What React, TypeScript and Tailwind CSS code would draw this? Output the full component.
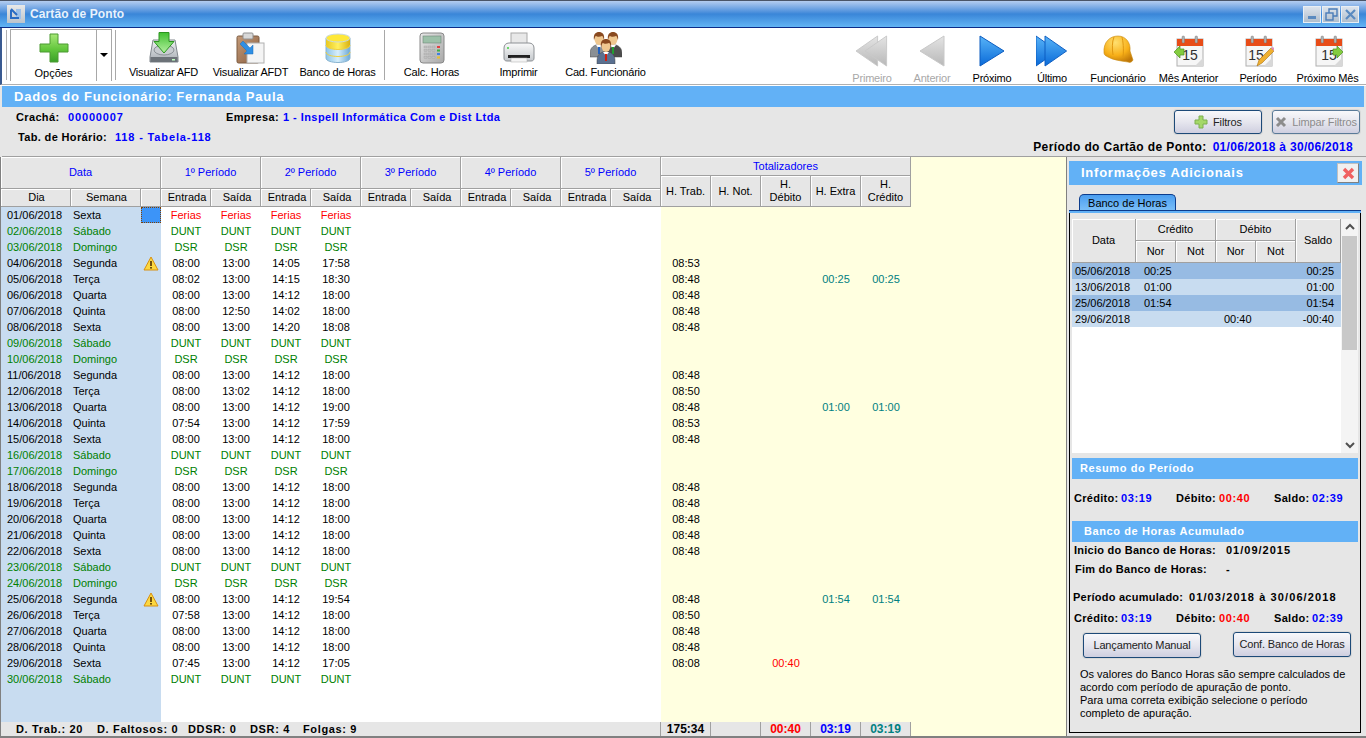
import React from "react";

const F = "[font-family:'Liberation_Sans',Arial,sans-serif]";

type Row = { d: string; w: string; t: string[]; k: "n" | "f" | "g"; trab?: string; deb?: string; ext?: string; cred?: string; mark?: "warn" | "sel" };
const std = ["08:00", "13:00", "14:12", "18:00"];
const fer = ["Ferias", "Ferias", "Ferias", "Ferias"];
const dunt = ["DUNT", "DUNT", "DUNT", "DUNT"];
const dsr = ["DSR", "DSR", "DSR", "DSR"];
const rows: Row[] = [
  { d: "01/06/2018", w: "Sexta", t: fer, k: "f", mark: "sel" },
  { d: "02/06/2018", w: "Sábado", t: dunt, k: "g" },
  { d: "03/06/2018", w: "Domingo", t: dsr, k: "g" },
  { d: "04/06/2018", w: "Segunda", t: ["08:00", "13:00", "14:05", "17:58"], k: "n", trab: "08:53", mark: "warn" },
  { d: "05/06/2018", w: "Terça", t: ["08:02", "13:00", "14:15", "18:30"], k: "n", trab: "08:48", ext: "00:25", cred: "00:25" },
  { d: "06/06/2018", w: "Quarta", t: std, k: "n", trab: "08:48" },
  { d: "07/06/2018", w: "Quinta", t: ["08:00", "12:50", "14:02", "18:00"], k: "n", trab: "08:48" },
  { d: "08/06/2018", w: "Sexta", t: ["08:00", "13:00", "14:20", "18:08"], k: "n", trab: "08:48" },
  { d: "09/06/2018", w: "Sábado", t: dunt, k: "g" },
  { d: "10/06/2018", w: "Domingo", t: dsr, k: "g" },
  { d: "11/06/2018", w: "Segunda", t: std, k: "n", trab: "08:48" },
  { d: "12/06/2018", w: "Terça", t: ["08:00", "13:02", "14:12", "18:00"], k: "n", trab: "08:50" },
  { d: "13/06/2018", w: "Quarta", t: ["08:00", "13:00", "14:12", "19:00"], k: "n", trab: "08:48", ext: "01:00", cred: "01:00" },
  { d: "14/06/2018", w: "Quinta", t: ["07:54", "13:00", "14:12", "17:59"], k: "n", trab: "08:53" },
  { d: "15/06/2018", w: "Sexta", t: std, k: "n", trab: "08:48" },
  { d: "16/06/2018", w: "Sábado", t: dunt, k: "g" },
  { d: "17/06/2018", w: "Domingo", t: dsr, k: "g" },
  { d: "18/06/2018", w: "Segunda", t: std, k: "n", trab: "08:48" },
  { d: "19/06/2018", w: "Terça", t: std, k: "n", trab: "08:48" },
  { d: "20/06/2018", w: "Quarta", t: std, k: "n", trab: "08:48" },
  { d: "21/06/2018", w: "Quinta", t: std, k: "n", trab: "08:48" },
  { d: "22/06/2018", w: "Sexta", t: std, k: "n", trab: "08:48" },
  { d: "23/06/2018", w: "Sábado", t: dunt, k: "g" },
  { d: "24/06/2018", w: "Domingo", t: dsr, k: "g" },
  { d: "25/06/2018", w: "Segunda", t: ["08:00", "13:00", "14:12", "19:54"], k: "n", trab: "08:48", ext: "01:54", cred: "01:54", mark: "warn" },
  { d: "26/06/2018", w: "Terça", t: ["07:58", "13:00", "14:12", "18:00"], k: "n", trab: "08:50" },
  { d: "27/06/2018", w: "Quarta", t: std, k: "n", trab: "08:48" },
  { d: "28/06/2018", w: "Quinta", t: std, k: "n", trab: "08:48" },
  { d: "29/06/2018", w: "Sexta", t: ["07:45", "13:00", "14:12", "17:05"], k: "n", trab: "08:08", deb: "00:40" },
  { d: "30/06/2018", w: "Sábado", t: dunt, k: "g" },
];

const color = (k: Row["k"]) => (k === "f" ? "text-[#ff0000]" : k === "g" ? "text-[#008000]" : "text-black");

const Hd = ({ children, className = "" }: { children?: React.ReactNode; className?: string }) => (
  <div className={"flex items-center justify-center text-center leading-[13px] bg-[#e6e6e6] border-r border-b border-[#a0a0a0] shadow-[inset_1px_1px_0_#fff] " + className}>{children}</div>
);

const Plus = () => (
  <svg width="32" height="32" viewBox="0 0 32 32">
    <defs><linearGradient id="pg" x1="0" y1="0" x2="0" y2="1"><stop offset="0" stopColor="#a8e878" /><stop offset="0.55" stopColor="#62c63c" /><stop offset="1" stopColor="#3aa028" /></linearGradient></defs>
    <path d="M12 2h8v10h10v8H20v10h-8V20H2v-8h10z" fill="url(#pg)" stroke="#4c9a32" strokeLinejoin="round" />
  </svg>
);
const SmallPlus = () => (
  <svg width="14" height="14" viewBox="0 0 14 14"><path d="M5 1h4v4h4v4H9v4H5V9H1V5h4z" fill="#a4d868" stroke="#7cb050" strokeLinejoin="round" /></svg>
);
const Disk = () => (
  <svg width="32" height="32" viewBox="0 0 32 32">
    <defs>
      <linearGradient id="dg" x1="0" y1="0" x2="0" y2="1"><stop offset="0" stopColor="#f0f2f4" /><stop offset="1" stopColor="#a4aab0" /></linearGradient>
      <linearGradient id="dga" x1="0" y1="0" x2="0" y2="1"><stop offset="0" stopColor="#40c030" /><stop offset="1" stopColor="#b4f0a0" /></linearGradient>
    </defs>
    <path d="M5 8h22l3 17v5H2v-5z" fill="url(#dg)" stroke="#80868c" />
    <rect x="2.5" y="25" width="27" height="5" fill="#6c7278" /><rect x="24" y="27" width="3" height="1.5" fill="#c0ffc0" />
    <ellipse cx="16" cy="18" rx="10" ry="5" fill="#c8ccd0" stroke="#8a9096" />
    <path d="M11 0.5h10v9h5L16 21 6 9.5h5z" fill="url(#dga)" stroke="#2c9420" strokeLinejoin="round" />
  </svg>
);
const Clip = () => (
  <svg width="32" height="32" viewBox="0 0 32 32">
    <defs><linearGradient id="cg" x1="0" y1="0" x2="1" y2="1"><stop offset="0" stopColor="#c49a78" /><stop offset="1" stopColor="#8a5f40" /></linearGradient></defs>
    <rect x="2" y="4" width="22" height="27" rx="1.5" fill="url(#cg)" stroke="#7a5a40" />
    <rect x="8" y="1" width="10" height="6" rx="1" fill="#d8d8d8" stroke="#909090" />
    <rect x="12" y="11" width="17" height="20" fill="#f4f4f4" stroke="#b0b0b0" />
    <path d="M8 9l7 7 3-3v9h-9l3-3-7-7z" fill="#2f8fe4" stroke="#1c6cb8" strokeWidth="0.5" />
  </svg>
);
const Db = () => (
  <svg width="32" height="32" viewBox="0 0 32 32">
    <defs><linearGradient id="bg" x1="0" y1="0" x2="1" y2="0"><stop offset="0" stopColor="#8cc4e8" /><stop offset="0.5" stopColor="#d8eefa" /><stop offset="1" stopColor="#6aa8d8" /></linearGradient>
    <linearGradient id="by" x1="0" y1="0" x2="1" y2="0"><stop offset="0" stopColor="#e8c820" /><stop offset="0.5" stopColor="#fff060" /><stop offset="1" stopColor="#d8b010" /></linearGradient></defs>
    <path d="M4 6v20c0 6 24 6 24 0V6z" fill="url(#bg)" stroke="#8ab4d0" />
    <path d="M4 6v7c0 6 24 6 24 0V6z" fill="url(#by)" />
    <ellipse cx="16" cy="6" rx="12" ry="4" fill="#ffe838" stroke="#c8d8e0" />
    <path d="M4 13c0 6 24 6 24 0M4 20c0 6 24 6 24 0" fill="none" stroke="#f0d040" />
  </svg>
);
const Calc = () => (
  <svg width="32" height="32" viewBox="0 0 32 32">
    <defs><linearGradient id="kg" x1="0" y1="0" x2="1" y2="1"><stop offset="0" stopColor="#e8e8e8" /><stop offset="1" stopColor="#a8a8a8" /></linearGradient></defs>
    <rect x="4" y="1" width="24" height="30" rx="3" fill="url(#kg)" stroke="#888" />
    <rect x="7" y="4" width="18" height="7" fill="#9cc0a8" stroke="#708878" strokeWidth="0.6" />
    {[14, 17.5, 21, 24.5].map((y, i) => [8, 12, 16].map((x) => <rect key={x + "-" + y} x={x} y={y} width="3" height="2" fill="#c0c0c0" stroke="#999" strokeWidth="0.3" />).concat(<rect key={"c" + i} x="21" y={y} width="3" height="2" fill={["#e04040", "#40b040", "#4080e0", "#e8c030"][i]} />))}
  </svg>
);
const Printer = () => (
  <svg width="32" height="32" viewBox="0 0 32 32">
    <defs><linearGradient id="pr" x1="0" y1="0" x2="0" y2="1"><stop offset="0" stopColor="#fafafa" /><stop offset="1" stopColor="#c4c8cc" /></linearGradient></defs>
    <rect x="8" y="1" width="16" height="13" fill="#e8e8e8" stroke="#a8a8a8" />
    <path d="M1 16c0-3 2-5 5-5h20c3 0 5 2 5 5v10c0 2-1 3-3 3H4c-2 0-3-1-3-3z" fill="url(#pr)" stroke="#8c9094" />
    <rect x="5" y="23" width="22" height="3" fill="#202020" /><rect x="8" y="26" width="16" height="4" fill="#f4f4f4" stroke="#aaa" strokeWidth="0.5" />
    <circle cx="5" cy="16" r="1" fill="#40d040" />
  </svg>
);
const Person = ({ x, y, tie, suit }: { x: number; y: number; tie: string; suit: string }) => (
  <g transform={`translate(${x} ${y})`}>
    <path d="M0 22c0-6 3-8 6-9h6c3 1 6 3 6 9v3H0z" fill={suit} stroke="#444" strokeWidth="0.5" />
    <path d="M6 13l3 4 3-4z" fill="#fff" /><rect x="8" y="15" width="2" height="7" fill={tie} />
    <ellipse cx="9" cy="7" rx="4.5" ry="6" fill="#f0c890" />
    <path d="M4 8C3 2 6 0 9 0s6 2 5 8c-1-2-1-4-2-4-2 1-5 1-6 0-1 0-1 2-2 4z" fill="#8a4a20" />
  </g>
);
const People = () => (
  <svg width="32" height="32" viewBox="0 0 32 32">
    <Person x={0} y={0} tie="#2060c0" suit="#8a8f94" /><Person x={14} y={0} tie="#20a030" suit="#4c4c4c" /><Person x={7} y={7} tie="#d02010" suit="#5a7090" />
  </svg>
);
const Tri = ({ dir, n, off }: { dir: "l" | "r"; n: 1 | 2; off?: boolean }) => {
  const id = `t${dir}${n}${off ? "o" : ""}`;
  const a = off ? "#e4e4e4" : "#58b4f8";
  const b = off ? "#b8b8b8" : "#0a6ad8";
  const s = off ? "#c8c8c8" : "#0c5cc0";
  const p = dir === "r" ? (x: number) => `M${x} 1L${x + 24} 16L${x} 31z` : (x: number) => `M${x + 24} 1L${x} 16L${x + 24} 31z`;
  return (
    <svg width="32" height="32" viewBox="0 0 32 32">
      <defs><linearGradient id={id} x1="0" y1="0" x2="0" y2="1"><stop offset="0" stopColor={a} /><stop offset="1" stopColor={b} /></linearGradient></defs>
      {n === 2 ? (<><path d={p(0)} fill={`url(#${id})`} stroke={s} transform="scale(0.9 1)" /><path d={p(10)} fill={`url(#${id})`} stroke={s} transform="scale(0.9 1)" /></>) : <path d={p(4)} fill={`url(#${id})`} stroke={s} />}
    </svg>
  );
};
const Helmet = () => (
  <svg width="32" height="32" viewBox="0 0 32 32">
    <defs><radialGradient id="hg" cx="0.4" cy="0.25" r="0.8"><stop offset="0" stopColor="#ffe070" /><stop offset="0.6" stopColor="#f8b018" /><stop offset="1" stopColor="#c07808" /></radialGradient></defs>
    <path d="M2 18C1 7 8 1 16 1c8 0 13 7 12 15l3 9c-1 2-3 3-5 2-7-1-15-2-20-5-2-1-4-2-4-4z" fill="url(#hg)" stroke="#c88a10" strokeWidth="0.6" />
    <path d="M12 2c-2 5-2 11-1 18M20 2c1 4 2 12 1 20" fill="none" stroke="#e09810" />
  </svg>
);
const Cal = ({ kind }: { kind: "prev" | "edit" | "next" }) => (
  <svg width="32" height="32" viewBox="0 0 32 32">
    <rect x="4" y="4" width="26" height="27" fill="#f6f6f6" stroke="#b0b0b0" />
    <rect x="4" y="4" width="26" height="7" fill="#e84c18" />
    <rect x="9" y="1" width="2.5" height="7" rx="1" fill="#b0b0b0" stroke="#707070" strokeWidth="0.4" /><rect x="22" y="1" width="2.5" height="7" rx="1" fill="#b0b0b0" stroke="#707070" strokeWidth="0.4" />
    <text x={kind === "edit" ? 14 : 17} y="25" fontSize="14" textAnchor="middle" fill="#303030" fontFamily="'Liberation Sans',sans-serif">15</text>
    <path d="M22 31l8-8v8z" fill="#d8d8d8" />
    {kind === "prev" && <path d="M1 17l6-6v3h4v6H7v3z" fill="#84cc40" stroke="#4c9020" strokeWidth="0.7" />}
    {kind === "next" && <path d="M31 17l-6-6v3h-4v6h4v3z" fill="#84cc40" stroke="#4c9020" strokeWidth="0.7" />}
    {kind === "edit" && <><path d="M15 31l2-6 12-12 3 3-12 12z" fill="#f0b030" stroke="#a87010" strokeWidth="0.6" /><path d="M29 13l3 3 1-2-2-2z" fill="#e090c0" /></>}
  </svg>
);

const TopBtn = ({ w, icon, label }: { w: string; icon: React.ReactNode; label: string }) => (
  <div className={"flex flex-col items-center " + w}>
    <div className="h-8 mt-1">{icon}</div>
    <div className="mt-[2px] leading-3 whitespace-nowrap tracking-[-0.2px] text-black">{label}</div>
  </div>
);
const RBtn = ({ w, icon, label, off }: { w: string; icon: React.ReactNode; label: string; off?: boolean }) => (
  <div className={"flex flex-col items-center " + w}>
    <div className="h-8 mt-[7px]">{icon}</div>
    <div className={"mt-[5px] leading-3 whitespace-nowrap tracking-[-0.2px] " + (off ? "text-[#a8a8a8]" : "text-black")}>{label}</div>
  </div>
);
const Sep = ({ c = "mx-[2px]" }: { c?: string }) => <div className={"w-px h-[50px] mt-[2px] bg-[#a8a8a8] " + c} />;

const WinBtn = ({ children }: { children: React.ReactNode }) => (
  <div className="w-[18px] h-[17px] flex items-center justify-center bg-gradient-to-b from-[#dfe6ee] to-[#aebccb] shadow-[inset_0_0_0_1px_#e8eef4]">{children}</div>
);

const VBtn = ({ children, off, c = "" }: { children: React.ReactNode; off?: boolean; c?: string }) => (
  <div className={"flex items-center justify-center gap-[5px] rounded-[3px] border border-[#1d4a78] bg-gradient-to-b from-[#f8f8fb] via-[#e6e6ee] to-[#cfcfe0] shadow-[0_0_0_1px_#d8d8d8] tracking-[-0.15px] " + (off ? "border-[#5a7a98] text-[#8c8c8c] " : "text-[#222] ") + c}>{children}</div>
);

const Band = ({ children, c = "" }: { children: React.ReactNode; c?: string }) => (
  <div className={"bg-[#62b1f6] text-white font-bold tracking-[0.6px] flex items-center " + c}>{children}</div>
);

const Totals = () => (
  <div className="font-bold tracking-[0.3px] flex text-black">
    <span className="w-[47px]">Crédito:</span><span className="w-[55px] text-[#0000ff] tracking-[0.6px]">03:19</span>
    <span className="w-[43px]">Débito:</span><span className="w-[55px] text-[#ff0000] tracking-[0.6px]">00:40</span>
    <span className="w-[38px]">Saldo:</span><span className="text-[#0000ff] tracking-[0.6px]">02:39</span>
  </div>
);

const side = [
  ["05/06/2018", "00:25", "", "00:25"],
  ["13/06/2018", "01:00", "", "01:00"],
  ["25/06/2018", "01:54", "", "01:54"],
  ["29/06/2018", "", "00:40", "-00:40"],
];

export default function App() {
  return (
    <div className={"w-[1366px] h-[738px] overflow-hidden flex flex-col bg-[#e6e6e6] text-[11px] text-black " + F}>
      {/* Title bar */}
      <div className="h-[28px] shrink-0 flex items-center pl-[7px] pr-[7px] border-t border-[#4a5568] border-b border-b-[#0c2c88] bg-gradient-to-b from-[#b4cdf0] via-[#3a86d8] via-50% to-[#62b4f4]">
        <div className="w-[18px] h-[18px] flex items-center justify-center bg-gradient-to-b from-[#e8e8e8] to-[#bcc4cc]">
          <svg width="14" height="14" viewBox="0 0 14 14"><path d="M7 2h5v10H7z" fill="#9cc0ea" /><path d="M2 2l6 6M2 3v8h8" stroke="#2a6cc4" strokeWidth="2" fill="none" /></svg>
        </div>
        <div className="ml-[5px] font-bold text-[12px] text-[#e8f2fc] tracking-[0.1px]">Cartão de Ponto</div>
        <div className="ml-auto flex gap-[1px]">
          <WinBtn><div className="w-[8px] h-[3px] mt-[7px] bg-[#5a8ac0]" /></WinBtn>
          <WinBtn><svg width="13" height="13" viewBox="0 0 13 13" fill="none" stroke="#4a7cb8" strokeWidth="1.4"><rect x="1" y="5" width="7" height="7" /><path d="M4 5V1h8v7H8" /></svg></WinBtn>
          <WinBtn><svg width="13" height="13" viewBox="0 0 13 13" stroke="#5a8ac0" strokeWidth="2.2"><path d="M2 2l9 9M11 2l-9 9" /></svg></WinBtn>
        </div>
      </div>

      {/* Toolbar */}
      <div className="h-[57px] shrink-0 flex bg-white border-b border-b-[#b0b0b0] pl-[4px] pr-[4px] border-l-2 border-l-[#3a5a90]">
        <div className="w-px h-[50px] mt-[2px] bg-[#b0b0b0]" />
        <div className="ml-[3px] w-[87px] h-[52px] mt-[1px] border-l border-t border-r border-[#a8a8a8] flex flex-col items-center">
          <div className="h-8 mt-[2px]"><Plus /></div>
          <div className="mt-[3px] leading-3 text-black">Opções</div>
        </div>
        <div className="w-[15px] h-[52px] mt-[1px] border-t border-r border-[#a8a8a8] flex items-center justify-center">
          <div className="w-0 h-0 border-l-[4px] border-r-[4px] border-t-[4px] border-l-transparent border-r-transparent border-t-black mb-[2px]" />
        </div>
        <div className="w-px h-[50px] mt-[2px] bg-[#a8a8a8] ml-[3px] mr-[4px]" />
        <TopBtn w="w-[87px]" icon={<Disk />} label="Visualizar AFD" />
        <TopBtn w="w-[87px]" icon={<Clip />} label="Visualizar AFDT" />
        <TopBtn w="w-[87px]" icon={<Db />} label="Banco de Horas" />
        <Sep c="ml-[3px] mr-[3px]" />
        <TopBtn w="w-[87px]" icon={<Calc />} label="Calc. Horas" />
        <TopBtn w="w-[87px]" icon={<Printer />} label="Imprimir" />
        <TopBtn w="w-[87px]" icon={<People />} label="Cad. Funcionário" />
        <div className="flex-1" />
        <RBtn w="w-[60px]" icon={<Tri dir="l" n={2} off />} label="Primeiro" off />
        <RBtn w="w-[60px]" icon={<Tri dir="l" n={1} off />} label="Anterior" off />
        <RBtn w="w-[60px]" icon={<Tri dir="r" n={1} />} label="Próximo" />
        <RBtn w="w-[60px]" icon={<Tri dir="r" n={2} />} label="Último" />
        <RBtn w="w-[72px]" icon={<Helmet />} label="Funcionário" />
        <RBtn w="w-[69px]" icon={<Cal kind="prev" />} label="Mês Anterior" />
        <RBtn w="w-[70px]" icon={<Cal kind="edit" />} label="Período" />
        <RBtn w="w-[69px]" icon={<Cal kind="next" />} label="Próximo Mês" />
      </div>
      <div className="h-px shrink-0 bg-white" />

      {/* Employee band */}
      <div className="h-[21px] shrink-0 ml-[2px] mr-[2px] bg-[#62b1f6] text-white font-bold text-[13px] tracking-[0.8px] flex items-center pl-[12px]">
        <span>Dados do Funcionário:</span><span className="ml-[4px]">Fernanda Paula</span>
      </div>

      {/* Info */}
      <div className="h-[50px] shrink-0 flex justify-between ml-[2px] pr-[5px] font-bold tracking-[0.35px] border-b border-[#a0a0a0]">
        <div className="pl-[14px]">
          <div className="flex h-[20px] items-center">
            <span className="w-[52px]">Crachá:</span><span className="w-[158px] text-[#0000ff] tracking-[0.85px]">00000007</span>
            <span className="w-[57px]">Empresa:</span><span className="text-[#0000ff] tracking-[0.45px]">1 - Inspell Informática Com e Dist Ltda</span>
          </div>
          <div className="flex h-[20px] items-center pl-[2px]">
            <span className="w-[97px]">Tab. de Horário:</span><span className="text-[#0000ff] tracking-[0.85px]">118 - Tabela-118</span>
          </div>
        </div>
        <div className="flex flex-col items-end pt-[3px]">
          <div className="flex gap-[10px] font-normal tracking-normal mr-[1px]">
            <VBtn c="w-[88px] h-[24px]"><SmallPlus />Filtros</VBtn>
            <VBtn off c="w-[88px] h-[24px]">
              <svg width="12" height="12" viewBox="0 0 12 12" stroke="#8c8c8c" strokeWidth="3"><path d="M2 2l8 8M10 2l-8 8" /></svg>Limpar Filtros
            </VBtn>
          </div>
          <div className="mt-[7px] mr-[8px] text-[12px] leading-[13px] tracking-[0.4px]">Período do Cartão de Ponto:<span className="ml-[6px] text-[#0000ff] tracking-[0.3px]">01/06/2018 à 30/06/2018</span></div>
        </div>
      </div>

      {/* Main */}
      <div className="flex-1 flex min-h-0 pr-[3px] border-l border-[#808080] border-b-2 border-b-[#808080]">
        {/* Table */}
        <div className="w-[1066px] flex flex-col bg-[#ffffe0] border-r border-[#808080]">
          <div className="grid grid-cols-[70px_70px_20px_repeat(15,50px)] grid-rows-[19px_13px_18px] shrink-0 text-[#000] w-[910px]">
            <Hd className="col-span-3 row-span-2 text-[#0000ff] pb-[1px]">Data</Hd>
            {["1º Período", "2º Período", "3º Período", "4º Período", "5º Período"].map((p) => (
              <Hd key={p} className="col-span-2 row-span-2 text-[#0000ff]">{p}</Hd>
            ))}
            <Hd className="col-span-5 text-[#0000ff]">Totalizadores</Hd>
            <Hd className="row-span-2">H. Trab.</Hd>
            <Hd className="row-span-2">H. Not.</Hd>
            <Hd className="row-span-2">H.<br />Débito</Hd>
            <Hd className="row-span-2">H. Extra</Hd>
            <Hd className="row-span-2">H.<br />Crédito</Hd>
            <Hd className="pl-[2px]">Dia</Hd><Hd className="pl-[2px]">Semana</Hd><Hd />
            {Array.from({ length: 5 }).flatMap((_, i) => [<Hd key={"e" + i} className="pl-[3px]">Entrada</Hd>, <Hd key={"s" + i} className="pl-[3px]">Saída</Hd>])}
          </div>
          <div className="flex-1 flex min-h-0 pt-0">
            <div className="w-[160px] bg-[#c8dcf0]">
              {rows.map((r) => (
                <div key={r.d} className={"h-4 flex items-center " + color(r.k === "f" ? "n" : r.k)}>
                  <span className="w-[72px] pl-[6px]">{r.d}</span>
                  <span className="w-[68px]">{r.w}</span>
                  <span className="w-[20px] h-4 flex items-center justify-center">
                    {r.mark === "sel" && <span className="w-[20px] h-[16px] bg-[#3c94f8] border border-dotted border-[#804000]" />}
                    {r.mark === "warn" && (
                      <svg width="16" height="15" viewBox="0 0 16 15"><path d="M8 1l7 13H1z" fill="#fcd840" stroke="#d89010" strokeLinejoin="round" /><rect x="7.2" y="5" width="1.6" height="5" fill="#503000" /><rect x="7.2" y="11" width="1.6" height="1.6" fill="#503000" /></svg>
                    )}
                  </span>
                </div>
              ))}
            </div>
            <div className="w-[500px] bg-white">
              {rows.map((r) => (
                <div key={r.d} className={"h-4 grid grid-cols-[repeat(10,50px)] items-center text-center " + color(r.k)}>
                  {r.t.map((v, i) => <span key={i}>{v}</span>)}
                </div>
              ))}
            </div>
            <div className="flex-1">
              {rows.map((r) => (
                <div key={r.d} className="h-4 grid grid-cols-[repeat(5,50px)] items-center text-center">
                  <span className="text-black">{r.trab}</span><span />
                  <span className="text-[#ff0000]">{r.deb}</span>
                  <span className="text-[#008080]">{r.ext}</span>
                  <span className="text-[#008080]">{r.cred}</span>
                </div>
              ))}
            </div>
          </div>
          <div className="h-[14px] shrink-0 flex font-bold text-[12px] leading-[14px] w-[910px] bg-[#e6e6e6]">
            <div className="w-[660px] pl-[15px] text-[11px] tracking-[0.65px] whitespace-pre border-r border-[#a0a0a0] flex">
              <span className="w-[81px]">D. Trab.: 20</span><span className="w-[91px]">D. Faltosos: 0</span><span className="w-[62px]">DDSR: 0</span><span className="w-[53px]">DSR: 4</span><span>Folgas: 9</span>
            </div>
            <div className="w-[50px] text-center border-r border-[#a0a0a0]">175:34</div>
            <div className="w-[50px] border-r border-[#a0a0a0]" />
            <div className="w-[50px] text-center text-[#ff0000] border-r border-[#a0a0a0]">00:40</div>
            <div className="w-[50px] text-center text-[#0000ff] border-r border-[#a0a0a0]">03:19</div>
            <div className="w-[50px] text-center text-[#008080] border-r border-[#a0a0a0]">03:19</div>
          </div>
        </div>

        {/* Side panel */}
        <div className="flex-1 flex flex-col pl-[1px] pb-[3px]">
          <div className="h-[24px] mt-[4px] shrink-0 ml-[1px] mr-[1px] bg-[#62b1f6] text-white font-bold text-[13px] tracking-[0.75px] flex items-center pl-[12px] pr-[3px] justify-between">
            <span>Informações Adicionais</span>
            <div className="w-[22px] h-[20px] bg-[#f0f0f0] border border-[#c0c0c0] border-r-[#808080] border-b-[#808080] flex items-center justify-center">
              <svg width="13" height="13" viewBox="0 0 13 13" stroke="#f06060" strokeWidth="3.4"><path d="M2 2l9 9M11 2l-9 9" /></svg>
            </div>
          </div>
          <div className="h-[17px] mt-[9px] ml-[11px] w-[97px] shrink-0 rounded-t-[5px] border border-b-0 border-[#0c3c8c] bg-gradient-to-b from-[#4a9ef0] to-[#7cc0f8] flex items-center justify-center">Banco de Horas</div>
          <div className="ml-[1px] w-[292px] flex-1 min-h-0 border border-t-0 border-black flex flex-col px-[2px] relative">
            <div className="absolute -top-[1px] -left-[1px] -right-[1px] h-[3px] bg-[#62b1f6] border-t border-[#0c3c8c]" />
            <div className="h-[234px] mt-[8px] flex bg-white shrink-0">
              <div className="w-[269px]">
                <div className="grid grid-cols-[64px_40px_40px_40px_40px_45px] grid-rows-[22px_22px]">
                  <Hd className="row-span-2">Data</Hd>
                  <Hd className="col-span-2">Crédito</Hd>
                  <Hd className="col-span-2">Débito</Hd>
                  <Hd className="row-span-2">Saldo</Hd>
                  <Hd>Nor</Hd><Hd>Not</Hd><Hd>Nor</Hd><Hd>Not</Hd>
                </div>
                {side.map((r, i) => (
                  <div key={r[0]} className={"h-4 flex items-center " + (i % 2 === 0 && i < 3 ? "bg-[#97bbe3]" : "bg-[#c8dcf0]")}>
                    <span className="w-[72px] pl-[3px]">{r[0]}</span>
                    <span className="w-[80px]">{r[1]}</span>
                    <span className="w-[75px]">{r[2]}</span>
                    <span className="w-[35px] text-right">{r[3]}</span>
                  </div>
                ))}
              </div>
              <div className="w-[17px] flex flex-col items-center bg-[#f4f4f4]">
                <svg className="mt-[2px] shrink-0" width="12" height="12" viewBox="0 0 12 12" fill="none" stroke="#505050" strokeWidth="2"><path d="M2 8l4-4 4 4" /></svg>
                <div className="w-[15px] h-[114px] mt-[3px] bg-[#c8c8c8] shrink-0" />
                <div className="flex-1" />
                <svg className="mb-[2px] shrink-0" width="12" height="12" viewBox="0 0 12 12" fill="none" stroke="#505050" strokeWidth="2"><path d="M2 4l4 4 4-4" /></svg>
              </div>
            </div>
            <Band c="h-[21px] w-[286px] mt-[5px] shrink-0 pl-[8px]">Resumo do Período</Band>
            <div className="mt-[13px] pl-[2px] h-[13px] leading-[13px]"><Totals /></div>
            <Band c="h-[21px] w-[286px] mt-[16px] shrink-0 pl-[12px]">Banco de Horas Acumulado</Band>
            <div className="font-bold tracking-[0.25px] pl-[2px] mt-[2px] leading-[13px]">
              <div className="flex"><span className="w-[152px]">Inicio do Banco de Horas:</span><span className="tracking-[1px]">01/09/2015</span></div>
              <div className="flex mt-[6px] pl-[1px]"><span className="w-[151px]">Fim do Banco de Horas:</span><span>-</span></div>
              <div className="flex mt-[15px] -ml-[1px]"><span className="w-[116px]">Período acumulado:</span><span className="tracking-[1.1px]">01/03/2018 à 30/06/2018</span></div>
              <div className="mt-[8px]"><Totals /></div>
            </div>
            <div className="flex justify-between items-start pl-[11px] pr-[7px] mt-[7px]">
              <VBtn c="w-[118px] h-[25px] mt-[1px]">Lançamento Manual</VBtn>
              <VBtn c="w-[118px] h-[25px]">Conf. Banco de Horas</VBtn>
            </div>
            <div className="pl-[8px] mt-[10px] leading-[13px]">
              Os valores do Banco Horas são sempre calculados de<br />
              acordo com período de apuração de ponto.<br />
              Para uma correta exibição selecione o período<br />
              completo de apuração.
            </div>
          </div>
        </div>
      </div>
    </div>
  );
}
